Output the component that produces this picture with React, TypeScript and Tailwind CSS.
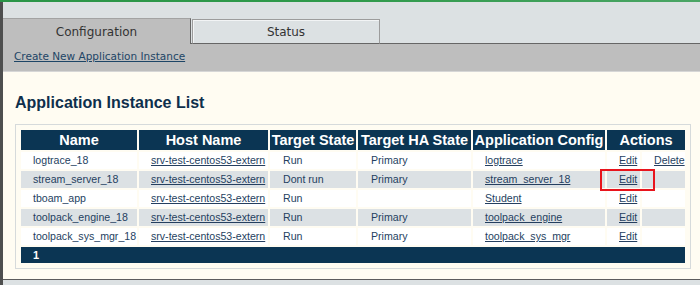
import React from "react";

type Row = { name: string; state: string; ha: string; cfg: string; del?: boolean };

const rows: Row[] = [
  { name: "logtrace_18", state: "Run", ha: "Primary", cfg: "logtrace", del: true },
  { name: "stream_server_18", state: "Dont run", ha: "Primary", cfg: "stream_server_18" },
  { name: "tboam_app", state: "Run", ha: "", cfg: "Student" },
  { name: "toolpack_engine_18", state: "Run", ha: "Primary", cfg: "toolpack_engine" },
  { name: "toolpack_sys_mgr_18", state: "Run", ha: "Primary", cfg: "toolpack_sys_mgr" },
];

const td = "h-[17px] p-0 pl-[12px] leading-[17px] whitespace-nowrap overflow-visible text-left align-middle";
const th = "h-[20px] p-0 text-center leading-[20px] whitespace-nowrap overflow-hidden bg-[#0b3553] text-white font-bold text-[14.5px]";

export default function App() {
  return (
    <div className="w-[700px] h-[285px] flex flex-col overflow-hidden bg-[#fffcf2]">
      <div className="h-[2px] w-full bg-gradient-to-r from-[#2a9548] via-[#2f9a4b] to-[#4aa565]" />
      <div className="flex flex-1 min-h-0">
        <div className="w-[3px] bg-[#4e4f4f]" />
        <div className="flex-1 flex flex-col min-w-0">
          {/* tab strip */}
          <div className="h-[42px] bg-[#dce1e3] flex items-end font-['DejaVu_Sans',sans-serif] text-[12px] text-[#333]">
            <div className="w-[188px] h-[26px] bg-[#bebebe] border-t border-r border-t-[#a3a3a3] border-r-[#666] flex items-center justify-center">
              Configuration
            </div>
            <div className="w-[1px] h-[1px] bg-[#666]" />
            <div className="w-[188px] h-[25px] bg-[#dce1e3] border border-[#9c9c9c] border-b-[#666] shadow-[inset_1px_1px_0_#f2f4f5] flex items-center justify-center">
              Status
            </div>
            <div className="flex-1 h-[1px] bg-[#666]" />
          </div>
          {/* link bar */}
          <div className="h-[28px] bg-[#bebebe] border-b border-[#d6d6d6] pl-[11px] pt-[6px] font-['DejaVu_Sans',sans-serif] text-[10.5px] leading-[12px]">
            <a className="text-[#1d4566] underline cursor-pointer">Create New Application Instance</a>
          </div>
          {/* content */}
          <div className="flex-1 flex flex-col pl-[12px] font-['Liberation_Sans',Arial,sans-serif]">
            <h1 className="mt-[22px] text-[16px] leading-[18px] font-bold text-[#0e2f4c]">Application Instance List</h1>
            <div className="relative mt-[12px] w-[676px] border border-[#d6dadb] p-[3px]">
              <table className="table-fixed w-[668px] border-separate border-spacing-[2px] text-[10.6px] text-[#253f5f]">
                <colgroup>
                  <col className="w-[116px]" />
                  <col className="w-[129px]" />
                  <col className="w-[86px]" />
                  <col className="w-[113px]" />
                  <col className="w-[132px]" />
                  <col className="w-[33px]" />
                  <col className="w-[43px]" />
                </colgroup>
                <thead>
                  <tr>
                    <th className={th}>Name</th>
                    <th className={th}>Host Name</th>
                    <th className={th}>Target State</th>
                    <th className={th}>Target HA State</th>
                    <th className={th}>Application Config</th>
                    <th className={th} colSpan={2}>Actions</th>
                  </tr>
                </thead>
                <tbody>
                  {rows.map((r, i) => {
                    const bg = i % 2 === 1 ? "bg-[#dce1e4]" : "bg-white";
                    return (
                      <tr key={r.name}>
                        <td className={`${td} ${bg}`}>{r.name}</td>
                        <td className={`${td} ${bg}`}>
                          <a className="underline cursor-pointer">srv-test-centos53-extern</a>
                        </td>
                        <td className={`${td} ${bg} pl-[13px]`}>{r.state}</td>
                        <td className={`${td} ${bg} pl-[13px]`}>{r.ha}</td>
                        <td className={`${td} ${bg}`}>
                          <a className="underline cursor-pointer">{r.cfg}</a>
                        </td>
                        <td className={`${td} ${bg} pl-[11px]`}>
                          <a className="underline cursor-pointer">Edit</a>
                        </td>
                        <td className={`${td} ${bg} pl-[10px]`}>
                          {r.del ? <a className="underline cursor-pointer">Delete</a> : null}
                        </td>
                      </tr>
                    );
                  })}
                </tbody>
                <tfoot>
                  <tr>
                    <td colSpan={7} className="h-[16px] p-0 pl-[12px] leading-[16px] bg-[#0b3553] text-white font-bold text-[11px]">
                      1
                    </td>
                  </tr>
                </tfoot>
              </table>
              <div className="absolute left-[584px] top-[44px] w-[55px] h-[22px] border-2 border-[#e8141c]" />
            </div>
          </div>
          <div className="h-[1px] bg-[#5c5c5c]" />
          <div className="h-[5px] bg-[#dce1e3]" />
        </div>
      </div>
    </div>
  );
}
